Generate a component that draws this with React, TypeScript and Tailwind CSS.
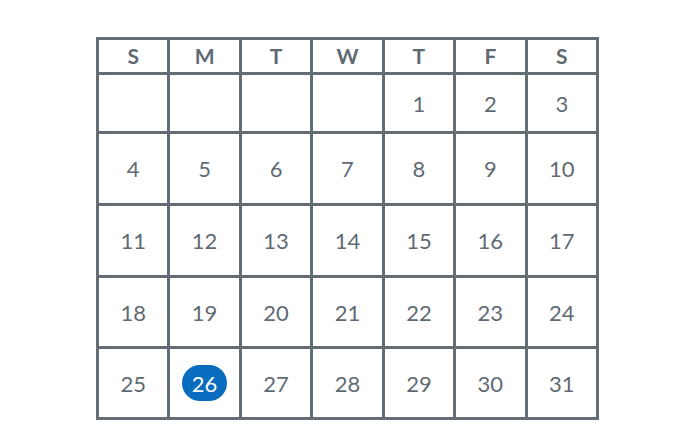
import React from "react";

const days = ["S", "M", "T", "W", "T", "F", "S"];
const rows: (number | null)[][] = [
  [null, null, null, null, 1, 2, 3],
  [4, 5, 6, 7, 8, 9, 10],
  [11, 12, 13, 14, 15, 16, 17],
  [18, 19, 20, 21, 22, 23, 24],
  [25, 26, 27, 28, 29, 30, 31],
];
const rowH = ["h-[56px]", "h-[69px]", "h-[69px]", "h-[68px]", "h-[68px]"];

export default function App() {
  return (
    <div
      className="w-[700px] h-[447px] bg-white pt-[37px] pl-[96px]"
      style={{ fontFamily: "Lato, 'Noto Sans', sans-serif" }}
    >
      <div className="w-[503px] bg-[#656d74] p-[3px] grid grid-cols-7 gap-[3px]">
        {days.map((d, i) => (
          <div
            key={"h" + i}
            className="bg-white h-[32px] flex items-center justify-center text-[21px] font-bold text-[#5f6a73]"
          >
            {d}
          </div>
        ))}
        {rows.map((r, ri) =>
          r.map((n, ci) => (
            <div
              key={ri + "-" + ci}
              className={`bg-white ${rowH[ri]} flex items-center justify-center text-[22px] text-[#5f6a73]`}
            >
              {n === 26 ? (
                <span className="bg-[#0a6cbf] text-white rounded-full w-[45px] h-[36px] flex items-center justify-center">
                  {n}
                </span>
              ) : (
                n
              )}
            </div>
          ))
        )}
      </div>
    </div>
  );
}
